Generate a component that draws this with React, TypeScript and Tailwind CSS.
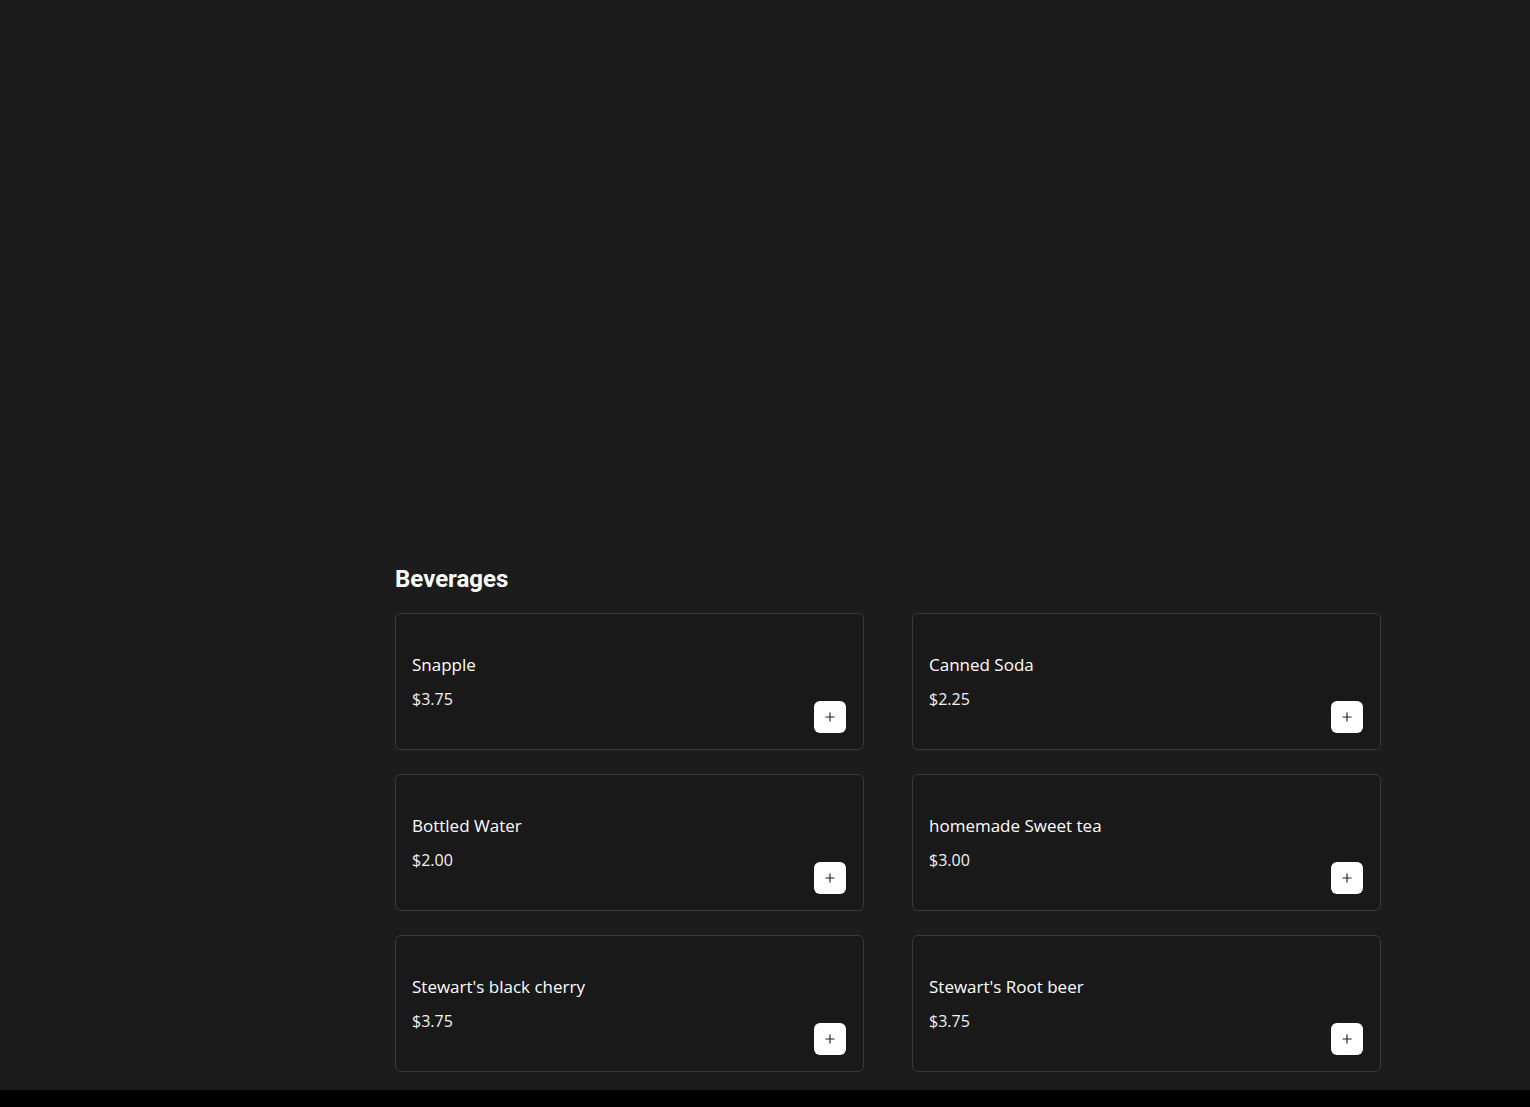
import { Plus } from 'lucide-react';

const items = [
  { name: 'Snapple', price: '$3.75' },
  { name: 'Canned Soda', price: '$2.25' },
  { name: 'Bottled Water', price: '$2.00' },
  { name: 'homemade Sweet tea', price: '$3.00' },
  { name: "Stewart's black cherry", price: '$3.75' },
  { name: "Stewart's Root beer", price: '$3.75' },
];

const MenuCard = ({ name, price }: { name: string; price: string }) => (
  <div className="flex items-end justify-between h-[137px] rounded-md border border-[#3a3a3a] bg-[#191919] pl-4 pr-[17px] pb-4">
    <div className="flex flex-col self-start pt-[39px]">
      <p className="text-[17px] leading-6 font-medium text-white">{name}</p>
      <p className="mt-[10px] text-[16px] leading-6 font-normal text-[#f2f2f2]">{price}</p>
    </div>
    <button className="flex items-center justify-center w-8 h-8 rounded-md bg-white text-[#222]">
      <Plus className="w-3.5 h-3.5" strokeWidth={2} />
    </button>
  </div>
);

export default function App() {
  return (
    <div className="h-[1107px] bg-black overflow-hidden" style={{ fontFamily: '"Open Sans", "Liberation Sans", sans-serif' }}>
      <div className="h-[1090px] bg-[#1c1c1c] overflow-hidden">
        <div className="w-[986px] ml-[395px] pt-[563px]">
          <h2 className="text-[24px] leading-8 font-bold text-white font-['Roboto',sans-serif]">Beverages</h2>
          <div className="mt-[18px] grid grid-cols-2 gap-x-12 gap-y-6">
            {items.map((item) => (
              <MenuCard key={item.name} name={item.name} price={item.price} />
            ))}
          </div>
        </div>
      </div>
    </div>
  );
}
